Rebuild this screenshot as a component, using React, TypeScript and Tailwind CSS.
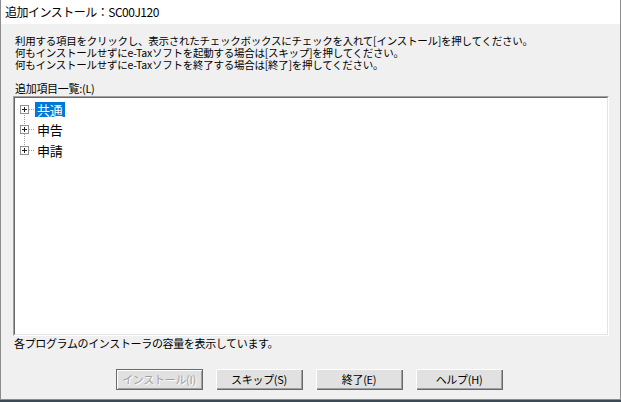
import React from "react";

const font = { fontFamily: '"Noto Sans CJK JP", "Liberation Sans", sans-serif' };

function PlusBox() {
  return (
    <div className="relative w-[9px] h-[9px] border border-[#919191] bg-white flex items-center justify-center">
      <div className="absolute w-[5px] h-[1px] bg-[#222]" />
      <div className="absolute w-[1px] h-[5px] bg-[#222]" />
    </div>
  );
}

function TreeRow({ label, selected, last }: { label: string; selected?: boolean; last?: boolean }) {
  return (
    <div className="relative flex items-center h-[20.5px]">
      {!last && (
        <div className="absolute left-[4px] top-[14px] h-[17px] border-l border-dotted border-[#a0a0a0]" />
      )}
      <PlusBox />
      <div className="w-[5px] border-t border-dotted border-[#a0a0a0] mr-[1px]" />
      <div
        className={
          "h-[15px] px-[2px] flex items-center text-[13px] leading-[15px] tracking-[-0.2px] " +
          (selected ? "bg-[#0078d7] text-white" : "text-black")
        }
      >
        {label}
      </div>
    </div>
  );
}

function Btn({ label, disabled }: { label: string; disabled?: boolean }) {
  return (
    <div
      className={
        "w-[87px] h-[21px] flex items-center justify-center text-[11px] tracking-[-0.3px] bg-[#e1e1e1] " +
        (disabled
          ? "border border-[#6a6a6a] text-[#a0a0a0] shadow-[inset_1px_1px_#ffffff,inset_-1px_-1px_#a0a0a0]"
          : "text-black shadow-[inset_1px_1px_#ffffff,inset_-1px_-1px_#696969,inset_-2px_-2px_#a0a0a0]")
      }
      style={disabled ? { textShadow: "1px 1px 0 #ffffff" } : undefined}
    >
      {label}
    </div>
  );
}

export default function App() {
  return (
    <div className="w-[621px] h-[402px] bg-[#3b4a55] overflow-hidden" style={font}>
      <div className="w-[621px] h-[400px] flex flex-col bg-[#f0f0f0] border-l border-r border-b border-[#8c8c8c]">
        <div className="h-[24px] bg-white flex items-center pl-[4px] text-[12px] tracking-[-0.5px] text-black">
          追加インストール：SC00J120
        </div>
        <div className="flex flex-col pl-[12px] pr-[11px]">
          <div className="mt-[11px] pl-[2px] text-[10.5px] leading-[12px] tracking-[-0.25px] text-black">
            <div>利用する項目をクリックし、表示されたチェックボックスにチェックを入れて[インストール]を押してください。</div>
            <div>何もインストールせずにe-Taxソフトを起動する場合は[スキップ]を押してください。</div>
            <div>何もインストールせずにe-Taxソフトを終了する場合は[終了]を押してください。</div>
          </div>
          <div className="mt-[11px] pl-[2px] h-[13px] text-[11px] leading-[13px] tracking-[-0.3px] text-black">
            追加項目一覧:(L)
          </div>
          <div className="mt-[1px] h-[240px] bg-white border border-t-[#a0a0a0] border-l-[#a0a0a0] border-r-white border-b-white">
            <div className="h-full border border-t-[#696969] border-l-[#696969] border-r-[#e3e3e3] border-b-[#e3e3e3] pt-[1px] pl-[5px]">
              <TreeRow label="共通" selected />
              <TreeRow label="申告" />
              <TreeRow label="申請" last />
            </div>
          </div>
          <div className="pl-[1px] h-[14px] text-[11px] leading-[14px] tracking-[-0.35px] text-black">
            各プログラムのインストーラの容量を表示しています。
          </div>
          <div className="mt-[19px] flex justify-center gap-[13px] pr-[4px]">
            <Btn label="インストール(I)" disabled />
            <Btn label="スキップ(S)" />
            <Btn label="終了(E)" />
            <Btn label="ヘルプ(H)" />
          </div>
        </div>
      </div>
    </div>
  );
}
